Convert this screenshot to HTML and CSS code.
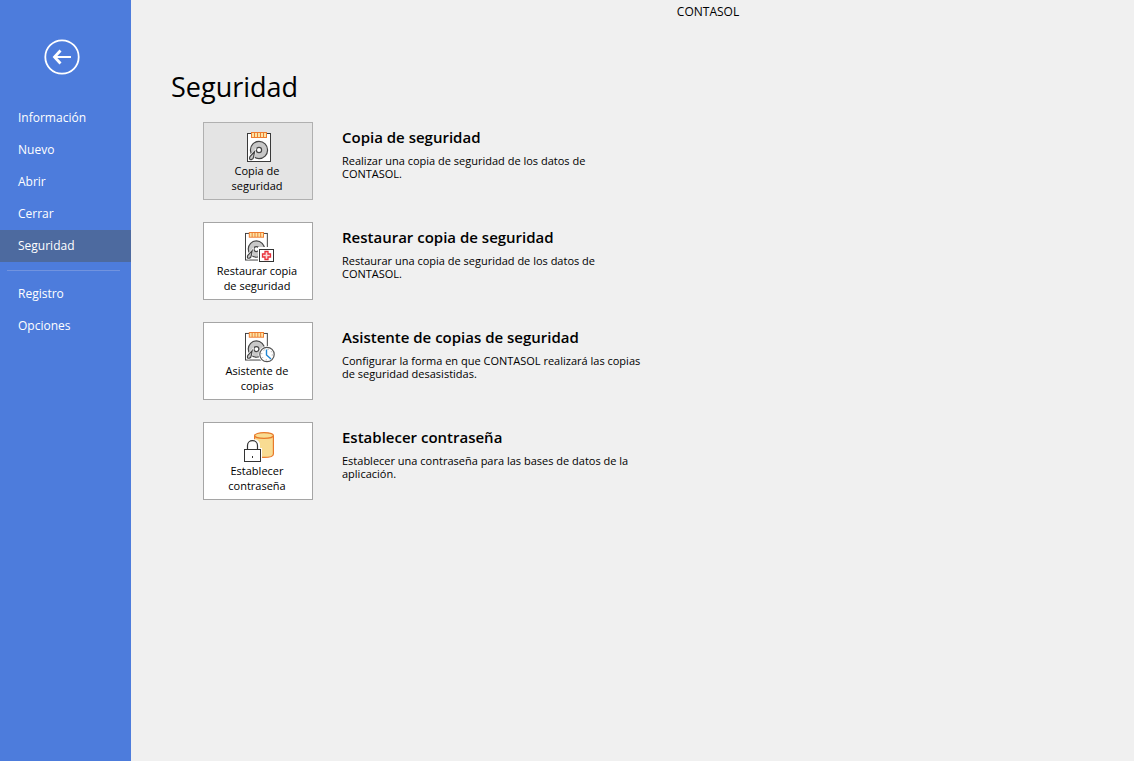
FILE: index.html
```html
<!DOCTYPE html>
<html lang="es">
<head>
<meta charset="utf-8">
<title>CONTASOL</title>
<link rel="stylesheet" href="styles.css">
</head>
<body>
<svg class="defs" aria-hidden="true">
  <defs>
    <g id="drive">
      <rect x=".5" y="1.5" width="23" height="28" fill="#fff" stroke="#3a3a3a"/>
      <rect x="4" y="0" width="16" height="6" fill="#ed7d31"/>
      <path d="M6 1v4M9 1v4M12 1v4M15 1v4M18 1v4" stroke="#fbe3a6" stroke-width="2"/>
      <circle cx="12" cy="18" r="8.6" fill="#c8c8c8" stroke="#444" stroke-width="1.2"/>
      <circle cx="12" cy="18" r="2.6" fill="#fff" stroke="#444" stroke-width="1.2"/>
      <path d="M7.6 19.5L3 24.5Q1.6 28 4.4 27.6Q6.6 27 6.6 24.8Z" fill="#c8c8c8" stroke="#fff" stroke-width="2.4"/>
      <path d="M7.6 19.5L3 24.5Q1.6 28 4.4 27.6Q6.6 27 6.6 24.8Z" fill="#c8c8c8" stroke="#444" stroke-width="1.2"/>
    </g>
  </defs>
</svg>
<div class="app">
  <nav class="sidebar">
    <button class="back" type="button" aria-label="Volver">
      <svg width="36" height="36" viewBox="0 0 36 36" fill="none" stroke="#fff">
        <circle cx="18" cy="18" r="16.7" stroke-width="1.8"/>
        <path d="M27 18H11" stroke-width="2"/>
        <path d="M16.500 11.500L10.500 18L16.500 24.500" stroke-width="2.800"/>
      </svg>
    </button>
    <a class="item" href="#">Información</a>
    <a class="item" href="#">Nuevo</a>
    <a class="item" href="#">Abrir</a>
    <a class="item" href="#">Cerrar</a>
    <a class="item active" href="#" aria-current="page">Seguridad</a>
    <hr class="divider">
    <a class="item" href="#">Registro</a>
    <a class="item" href="#">Opciones</a>
  </nav>
  <div class="content">
    <header class="titlebar">CONTASOL</header>
    <main class="page">
      <h1 class="title">Seguridad</h1>
      <section class="row">
        <button class="tile selected" type="button">
          <svg width="32" height="32" viewBox="0 0 32 32"><use href="#drive" x="5" y="1"/></svg>
          <span class="label">Copia de<br>seguridad</span>
        </button>
        <div class="info">
          <h2 class="name">Copia de seguridad</h2>
          <p class="text">Realizar una copia de seguridad de los datos de<br>CONTASOL.</p>
        </div>
      </section>
      <section class="row">
        <button class="tile" type="button">
          <svg width="32" height="32" viewBox="0 0 32 32">
            <use href="#drive" transform="translate(3 1) scale(.95)"/>
            <rect x="16" y="16" width="17" height="16" fill="#fff"/>
            <rect x="17.5" y="18.5" width="14" height="12" fill="#fff" stroke="#333"/>
            <path d="M23 20.500h3v2.500h2.500v3H26v2.500h-3V26h-2.500v-3H23z" fill="#fbdada" stroke="#e8303a" stroke-width="1.300"/>
          </svg>
          <span class="label">Restaurar copia<br>de seguridad</span>
        </button>
        <div class="info">
          <h2 class="name">Restaurar copia de seguridad</h2>
          <p class="text">Restaurar una copia de seguridad de los datos de<br>CONTASOL.</p>
        </div>
      </section>
      <section class="row">
        <button class="tile" type="button">
          <svg width="32" height="32" viewBox="0 0 32 32">
            <use href="#drive" transform="translate(3 1) scale(.95)"/>
            <circle cx="25" cy="23.500" r="8.500" fill="#fff"/>
            <circle cx="25" cy="23.500" r="7.200" fill="#fff" stroke="#555" stroke-width="1.200"/>
            <circle cx="25" cy="23.500" r="5.300" fill="none" stroke="#999" stroke-dasharray="1 3.160"/>
            <path d="M24.500 18.500v5.500l4.500 4" fill="none" stroke="#1f87d6" stroke-width="1.400"/>
          </svg>
          <span class="label">Asistente de<br>copias</span>
        </button>
        <div class="info">
          <h2 class="name">Asistente de copias de seguridad</h2>
          <p class="text">Configurar la forma en que CONTASOL realizará las copias<br>de seguridad desasistidas.</p>
        </div>
      </section>
      <section class="row">
        <button class="tile" type="button">
          <svg width="32" height="32" viewBox="0 0 32 32">
            <path d="M12.600 4.500V23c0 4.600 18.800 4.600 18.800 0V4.500" fill="#f8dc92" stroke="#e8792b" stroke-width="1.200"/>
            <ellipse cx="22" cy="4.500" rx="9.400" ry="2.900" fill="#f8dc92" stroke="#e8792b" stroke-width="1.200"/>
            <path d="M1 17h2v-3c0-8 15-8 15 0v3h2v15H1z" fill="#fff"/>
            <path d="M5.500 18.500v-4c0-6.500 10-6.500 10 0v4" fill="none" stroke="#333" stroke-width="1.200"/>
            <rect x="2.500" y="18.500" width="16" height="12" fill="#fff" stroke="#333"/>
            <path d="M10.500 25v2" stroke="#333"/>
          </svg>
          <span class="label">Establecer<br>contraseña</span>
        </button>
        <div class="info">
          <h2 class="name">Establecer contraseña</h2>
          <p class="text">Establecer una contraseña para las bases de datos de la<br>aplicación.</p>
        </div>
      </section>
    </main>
  </div>
</div>
</body>
</html>
```
FILE: styles.css
```css
* { box-sizing: border-box; }
body {
  margin: 0;
  background: #f0f0f0;
  color: #000;
  font: 12px/16px "Open Sans", "Noto Sans", sans-serif;
}
.defs { display: none; }
.app { display: flex; min-height: 100vh; }
.sidebar {
  flex: none;
  width: 131px;
  padding-top: 39px;
  background: #4d7cdc;
}
.back {
  display: block;
  margin: 0 0 27px 44px;
  padding: 0;
  border: 0;
  background: none;
}
.back svg, .tile svg { display: block; }
.item {
  display: block;
  padding: 0 18px;
  line-height: 32px;
  color: #fff;
  text-decoration: none;
}
.active { background: #4d6a9f; }
.divider {
  margin: 8px 11px 7px 7px;
  border: 0;
  border-top: 1px solid #7193df;
}
.content { flex: 1; min-width: 0; }
.titlebar {
  padding: 4px 0;
  padding-left: 151px;
  text-align: center;
}
.page { padding: 43px 40px; }
.title {
  margin: 0 0 15px;
  font-size: 27px;
  line-height: 40px;
  font-weight: 400;
}
.row {
  display: flex;
  gap: 29px;
  margin: 0 0 22px 32px;
}
.tile {
  display: flex;
  flex-direction: column;
  align-items: center;
  flex: none;
  width: 110px;
  height: 78px;
  padding: 8px 0 0;
  border: 1px solid #a5a5a5;
  background: #fff;
  color: #000;
  font: inherit;
  font-size: 11px;
  line-height: 15px;
  text-align: center;
}
.tile svg { overflow: visible; }
.label { padding-right: 2px; }
.selected { background: #e4e4e4; border-color: #b0b0b0; }
.info { padding-top: 5px; }
.name {
  margin: 0 0 7px;
  font-size: 15px;
  line-height: 20px;
  font-weight: 600;
}
.text {
  margin: 0;
  font-size: 11px;
  line-height: 13px;
}
```
